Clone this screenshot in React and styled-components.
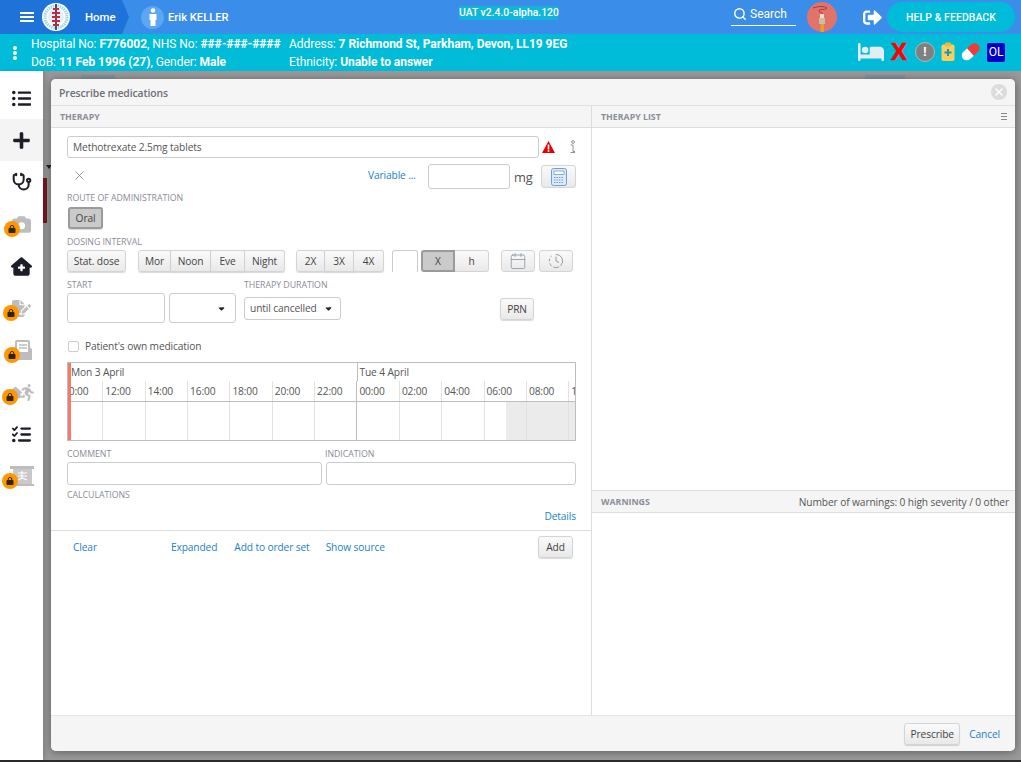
import React from 'react';
import styled, { createGlobalStyle } from 'styled-components';
import { FaBed, FaLock, FaCamera, FaHouseMedical, FaFileSignature, FaPersonRunning, FaListCheck, FaCaretDown, FaHouse } from 'react-icons/fa6';
import { FaSignOutAlt as FaLogout, FaListUl, FaPlus as FaPlusOld } from 'react-icons/fa';
import { Stethoscope, X as CloseX, Calendar, ClockFading, Search } from 'lucide-react';

const Global = createGlobalStyle`
  html, body { margin: 0; padding: 0; background: #fff; }
  * { box-sizing: border-box; }
  body { font-family: "Open Sans", "Liberation Sans", sans-serif; }
`;

const Page = styled.div`
  width: 1021px; height: 762px; overflow: hidden; display: flex; flex-direction: column; background: #999;
`;
const TopBar = styled.header`
  height: 34px; background: #3a8de8; display: grid; grid-template-columns: 459px auto 1fr; color: #fff;
  font-family: Roboto, sans-serif; flex: none;
`;
const Crumbs = styled.div`display: flex; align-items: center;`;
const HomeCrumb = styled.div`
  width: 129px; height: 34px; background: #1f73d8; clip-path: polygon(0 0, 122px 0, 129px 17px, 122px 34px, 0 34px);
  display: flex; align-items: center; padding-left: 20px; flex: none;
`;
const Burger = styled.div`
  width: 14px; height: 10px; border-top: 2px solid #fff; border-bottom: 2px solid #fff; position: relative;
  &::after { content: ''; position: absolute; left: 0; right: 0; top: 2px; height: 2px; background: #fff; }
`;
const LogoWrap = styled.svg`width: 28px; height: 28px; margin-left: 8px; flex: none;`;
const HomeText = styled.span`font-size: 11.4px; font-weight: 500; margin-left: 15px;`;
const PersonBadge = styled.span`
  width: 23px; height: 23px; border-radius: 50%; background: #5ca6f2; margin-left: 12px; display: flex; align-items: center; justify-content: center; flex: none;
`;
const PatientName = styled.span`font-size: 11.2px; font-weight: 500; margin-left: 4px;`;
const Version = styled.div`
  align-self: start; margin-top: 6px; height: 14px; line-height: 14px; background: #0fb6da; font-size: 10.4px; font-weight: 500;
  width: 99px; white-space: nowrap;
`;
const TopRight = styled.div`display: flex; align-items: center; justify-content: flex-end; padding-right: 6px;`;
const SearchBox = styled.div`
  width: 65px; height: 22px; margin-top: -4px; padding: 0 0 2px 2px; border-bottom: 1px solid #fff; display: flex; align-items: center; gap: 3px; font-size: 12px; font-weight: 400;
`;
const Avatar = styled.svg`width: 30px; height: 30px; margin-left: 11px;`;
const Logout = styled.span`margin-left: 26px; display: flex; font-size: 19px;`;
const HelpButton = styled.div`
  width: 128px; height: 30px; margin-left: 5px; border-radius: 15px; background: #00bcd9; display: flex; align-items: center; justify-content: center;
  font-size: 10.4px; font-weight: 500; letter-spacing: .1px;
`;

const PatientBar = styled.div`
  height: 37px; background: #00bcd9; flex: none; display: flex; color: #fff; font-family: Roboto, sans-serif; font-size: 12px; letter-spacing: -.04px; align-items: center;
`;
const Dots = styled.div`
  width: 31px; display: flex; flex-direction: column; align-items: center; gap: 1px;
  span { width: 4px; height: 4px; background: #fff; border-radius: 50%; margin-left: -1px; }
`;
const PatientCol = styled.div`width: ${p => p.$w}px; line-height: 18px; white-space: nowrap; b { font-weight: 700; }`;
const PatientIcons = styled.div`flex: 1; display: flex; justify-content: flex-end; align-items: center; padding-right: 16px; margin-top: -1px;`;
const BedIcon = styled(FaBed)`font-size: 26px; color: #e3edf6; margin-right: 7px;`;
const RedX = styled.span`
  font: 700 24px/1 "Liberation Sans", sans-serif; color: #f00; width: 16px; margin-right: 8px; text-align: center; -webkit-text-stroke: .6px #f00;
`;
const Alert = styled.span`
  width: 20px; height: 20px; border-radius: 50%; background: #808080; border: 1px solid #b4b8bb; color: #fff; font: 700 13px/18px "Liberation Sans", sans-serif; text-align: center; margin-right: 6px;
`;
const SmallSvg = styled.svg`width: ${p => p.$w}px; height: 20px; margin-right: ${p => p.$m}px;`;
const OlBadge = styled.span`
  width: 18px; height: 19px; background: #0000c8; border-radius: 2px; font: 400 12px/19px Roboto, sans-serif; text-align: center; color: #fff;
`;

const Main = styled.div`flex: 1; display: flex; min-height: 0;`;
const Sidebar = styled.nav`
  width: 43px; background: #fff; padding-top: 6px; flex: none; box-shadow: 2px 0 4px rgba(0,0,0,.15); z-index: 1;
`;
const NavItem = styled.div`
  height: 42px; width: 43px; position: relative; display: flex; align-items: center; justify-content: center;
  background: ${p => p.$active ? '#f4f4f4' : 'transparent'}; color: ${p => p.$off ? '#bdbdbd' : '#1c1c2a'}; font-size: ${p => p.$fs || 19}px;
`;
const LockBadge = styled.span`
  position: absolute; left: ${p => p.$l}px; top: 18px; width: 16px; height: 16px; border-radius: 50%; background: #ff9800; color: #33240c; font-size: 8px;
  display: flex; align-items: center; justify-content: center;
`;
const RunnerIcon = styled.span`display: flex; align-items: center; font-size: 13px; margin-left: 2px; svg + svg { font-size: 17px; margin-left: -3px; }`;

const Backdrop = styled.div`flex: 1; position: relative; padding: 8px 6px 9px 8px; display: flex;`;
const GhostRed = styled.div`position: absolute; left: 0; top: 107px; width: 4px; height: 45px; background: #761a20;`;
const GhostArrow = styled.div`position: absolute; left: 3px; top: 94px; border: 3px solid transparent; border-top: 4px solid #222; border-bottom: 0;`;
const GhostTab = styled.div`position: absolute; left: ${p => p.$l}px; top: 4px; width: ${p => p.$w}px; height: 4px; background: #85929f;`;
const Dialog = styled.section`
  flex: 1; background: #fff; border-radius: 5px; box-shadow: 0 1px 8px rgba(0,0,0,.4); display: flex; flex-direction: column; overflow: hidden; position: relative; color: #555;
  font-size: 10.2px; letter-spacing: -.12px;
`;
const DialogHead = styled.div`
  height: 27px; flex: none; background: #f5f5f5; border-bottom: 1px solid #e0e0e0; display: flex; align-items: center; justify-content: space-between; padding: 1px 8px 0;
  font-weight: 600; color: #6c7078; font-size: 10.4px; letter-spacing: -.1px;
`;
const CloseDot = styled.span`
  width: 16px; height: 16px; border-radius: 50%; background: #dcdcdc; color: #fff; display: flex; align-items: center; justify-content: center; margin-top: -2px;
`;
const Columns = styled.div`flex: 1; display: flex; min-height: 0;`;
const LeftCol = styled.div`width: 541px; flex: none; border-right: 1px solid #ddd; display: flex; flex-direction: column;`;
const RightCol = styled.div`flex: 1; display: flex; flex-direction: column;`;
const SectionHead = styled.div`
  height: ${p => p.$h || 22}px; flex: none; background: #f5f5f5; border-bottom: 1px solid #ddd; ${p => p.$top && 'border-top: 1px solid #ddd;'} display: flex; align-items: center; justify-content: space-between; padding: 0 8px 0 9px;
  font-size: 8.8px; font-weight: 700; color: #8b8e98; letter-spacing: 0;
`;
const WarnCount = styled.span`font-size: 10.2px; font-weight: 400; color: #555; letter-spacing: -.1px; margin-right: -2px;`;
const MenuLines = styled.span`width: 6px; height: 7px; border-top: 1px solid #888; border-bottom: 1px solid #888; position: relative;
  &::after { content: ''; position: absolute; left: 0; right: 0; top: 2px; height: 1px; background: #888; }
`;
const Form = styled.div`padding: 8px 15px 0 16px; flex: none;`;
const Row = styled.div`display: flex; align-items: center; margin-top: ${p => p.$mt || 0}px; height: ${p => p.$h ? p.$h + 'px' : 'auto'};`;
const Field = styled.div`
  height: ${p => p.$h}px; width: ${p => p.$w ? p.$w + 'px' : 'auto'}; ${p => p.$grow && 'flex: 1;'}
  border: 1px solid #ccc; border-radius: 3px; background: #fff; display: flex; align-items: center; padding: 0 ${p => p.$pr || 5}px 0 5px; margin-left: ${p => p.$ml || 0}px; color: #555; flex-shrink: 0;
  justify-content: ${p => p.$justify || 'flex-start'};
  white-space: nowrap;
`;
const Label = styled.div`
  font-size: 8.8px; color: #8a8c97; text-transform: uppercase; letter-spacing: -.05px; line-height: 11px; margin-top: ${p => p.$mt || 0}px; width: ${p => p.$w ? p.$w + 'px' : 'auto'}; flex: none;
`;
const Link = styled.a`
  color: #1a7fca; margin-left: ${p => p.$ml || 0}px; margin-top: ${p => p.$mt || 0}px; white-space: nowrap;
`;
const Btn = styled.div`
  height: ${p => p.$h || 22}px; width: ${p => p.$w}px; margin-left: ${p => p.$ml || 0}px; margin-top: ${p => p.$mt || 0}px; flex: none;
  display: flex; align-items: center; justify-content: center; color: #444; white-space: nowrap;
  border: 1px solid ${p => p.$on ? '#9a9a9a' : '#d4d4d4'};
  ${p => p.$on ? 'border-width: 2px;' : ''}
  background: ${p => p.$on ? '#cacaca' : 'linear-gradient(#fafafa, #e9e9e9)'};
  border-radius: ${p => p.$joined === 'left' ? '3px 0 0 3px' : p.$joined === 'right' ? '0 3px 3px 0' : p.$joined === 'mid' ? '0' : '3px'};
  ${p => p.$joined && p.$joined !== 'left' && 'border-left-width: 0;'}
  ${p => p.$lift && 'box-shadow: 0 1px 1px rgba(0,0,0,.15);'}
`;
const ShortInput = styled.div`
  width: 26px; height: 22px; margin-left: 8px; border: 1px solid #ccc; border-bottom: none; border-radius: 3px 3px 0 0; background: #fff; flex: none;
`;
const ClearCell = styled.span`display: flex; color: #888; margin: -3px 0 0 5px; width: 296px; flex: none;`;
const Unit = styled.span`margin-left: 4px; width: 27px; font-size: 12.8px; flex: none;`;
const Check = styled.span`width: 11px; height: 11px; border: 1px solid #ccc; border-radius: 2px; margin-left: 1px; flex: none;`;
const CheckText = styled.span`margin-left: 6px; line-height: 14px;`;
const Warn = styled.svg`width: 13px; height: 12px; margin-left: 3px; flex: none;`;
const InfoMark = styled.svg`margin-left: 13px; width: 8px; height: 14px; flex: none;`;

const Timeline = styled.div`
  margin-top: 9px; height: 79px; border: 1px solid #bdbdbd; position: relative; overflow: hidden; background: #fff;
`;
const RedBar = styled.div`position: absolute; left: 0; top: 0; bottom: 0; width: 3px; background: #f47a6b; z-index: 1;`;
const Track = styled.div`margin-left: -8px; width: 640px; display: flex; flex-direction: column; height: 100%;`;
const DayRow = styled.div`display: flex; height: 18px;`;
const Day = styled.div`
  width: ${p => p.$w}px; padding-left: ${p => p.$pad}px; line-height: 18px; color: #555; ${p => p.$line && 'border-left: 1px solid #bdbdbd;'} flex: none;
`;
const HourRow = styled.div`display: flex; height: 21px; border-bottom: 1px solid #bdbdbd;`;
const Hour = styled.div`
  width: ${p => p.$day ? 42.5 : 42.35}px; flex: none; padding-left: 2px; line-height: 20px; border-left: 1px solid ${p => p.$day ? '#bdbdbd' : '#e2e2e2'}; overflow: hidden; white-space: nowrap;
`;
const SlotRow = styled.div`display: flex; flex: 1;`;
const Slot = styled.div`
  width: ${p => p.$day ? 42.5 : 42.35}px; flex: none; border-left: 1px solid ${p => p.$day ? '#bdbdbd' : '#e2e2e2'};
  background: ${p => p.$shade === 'half' ? 'linear-gradient(90deg, #fff 50%, #ebebeb 50%)' : p.$shade === 'full' ? '#ebebeb' : '#fff'};
`;
const DetailsRow = styled.div`display: flex; justify-content: flex-end; margin-top: 8px; line-height: 14px;`;
const Actions = styled.div`
  border-top: 1px solid #ddd; margin-top: 7px; height: 33px; display: flex; align-items: center; padding: 0 18px 0 22px; flex: none;
`;
const Spacer = styled.div`flex: 1;`;
const DialogFoot = styled.div`
  height: 36px; flex: none; background: #f5f5f5; border-top: 1px solid #e5e5e5; display: flex; align-items: center; justify-content: flex-end; padding-right: 15px;
`;
const WarningsBody = styled.div`height: 202px; flex: none;`;
const BottomEdge = styled.div`height: 2px; background: #2c2c2c; flex: none;`;

const hours = ['10:00','12:00','14:00','16:00','18:00','20:00','22:00','00:00','02:00','04:00','06:00','08:00','10:00','12:00','14:00'];

const Logo = () => (
  <LogoWrap viewBox="0 0 28 28">
    <circle cx="14" cy="14" r="14" fill="#fff" />
    <circle cx="14" cy="14" r="11" fill="none" stroke="#9fd6ea" strokeWidth="3" strokeDasharray="1.5 .8" />
    <circle cx="14" cy="14" r="8" fill="#dff1f8" />
    <rect x="13" y="1" width="2" height="26" fill="#2a5c8a" />
    <path d="M11 6h6M10 10h8M10 14h8M10 18h8M11 22h6" stroke="#d8232a" strokeWidth="2" />
  </LogoWrap>
);

const Person = () => (
  <svg width="10" height="18" viewBox="0 0 10 18">
    <circle cx="5" cy="2.5" r="2.3" fill="#fff" />
    <path d="M1.5 6h7v6H7.5v6h-5v-6h-1z" fill="#fff" />
  </svg>
);

const Torch = () => (
  <Avatar viewBox="0 0 30 30">
    <circle cx="15" cy="15" r="15" fill="#e2736b" />
    <path d="M6 6c6-2 11-2 14 0-3 3-8 0-8 3 0 2 4 1 4 4" fill="none" stroke="#a33b3b" strokeWidth="1" />
    <rect x="13" y="12" width="4" height="8" fill="#e7dcc6" />
    <rect x="12" y="16" width="6" height="6" fill="#c9bfa8" />
    <rect x="13.5" y="22" width="3.5" height="8" fill="#e8a02c" />
  </Avatar>
);

const Clip = () => (
  <SmallSvg $w={14} $m={6} viewBox="0 0 14 20">
    <rect x="0.5" y="2.5" width="13" height="16.5" rx="2" fill="#f9cf5b" />
    <rect x="4" y="0.5" width="6" height="4" rx="1" fill="#f0b73c" />
    <path d="M7 7v7M3.5 10.5h7" stroke="#1597c4" strokeWidth="2" />
  </SmallSvg>
);

const Pill = () => (
  <SmallSvg $w={19} $m={7} viewBox="0 0 19 20">
    <g transform="rotate(-42 9.5 10)">
      <path d="M9.5 5H4.5a5 5 0 0 0 0 10h5z" fill="#fff" />
      <path d="M9.5 5h5.5a5 5 0 0 1 0 10H9.5z" fill="#ee3b3b" />
    </g>
  </SmallSvg>
);

const Calculator = () => (
  <svg width="16" height="18" viewBox="0 0 16 18" fill="none">
    <rect x=".5" y=".5" width="15" height="17" rx="2" fill="#dce9f7" stroke="#6f9fd0" />
    <rect x="3" y="3" width="10" height="3.5" fill="#fff" stroke="#6f9fd0" strokeWidth=".8" />
    <path d="M3 9.5h10M3 12h10M3 14.5h10" stroke="#6f9fd0" strokeWidth="1.2" strokeDasharray="1.4 1.1" />
  </svg>
);

const MailClipboard = () => (
  <svg width="22" height="20" viewBox="0 0 22 20">
    <path d="M1 9l4-3v3h12V6l4 3v11H1z" fill="#bdbdbd" />
    <rect x="5" y="1" width="13" height="12" rx="1" fill="#fff" stroke="#bdbdbd" strokeWidth="2" />
    <path d="M8 5h8M8 8h8" stroke="#bdbdbd" strokeWidth="1.5" />
  </svg>
);

const Counter = () => (
  <svg width="24" height="20" viewBox="0 0 24 20">
    <rect x="0" y="0" width="24" height="3" fill="#bdbdbd" />
    <rect x="3" y="3" width="19" height="15" fill="#c9c9c9" />
    <rect x="0" y="18" width="24" height="2" fill="#bdbdbd" />
    <path d="M8 7h9M8 10h9M12 5v8M8 14l4-2 5 2" stroke="#fff" strokeWidth="1.2" fill="none" />
  </svg>
);

const LockedItem = ({ left, children }) => (
  <NavItem $off>
    {children}
    <LockBadge $l={left}><FaLock /></LockBadge>
  </NavItem>
);

export default function App() {
  return (
    <Page>
      <Global />
      <TopBar>
        <Crumbs>
          <HomeCrumb>
            <Burger />
            <Logo />
            <HomeText>Home</HomeText>
          </HomeCrumb>
          <PersonBadge><Person /></PersonBadge>
          <PatientName>Erik KELLER</PatientName>
        </Crumbs>
        <Version>UAT v2.4.0-alpha.120</Version>
        <TopRight>
          <SearchBox><Search size={14} strokeWidth={2.4} />Search</SearchBox>
          <Torch />
          <Logout><FaLogout /></Logout>
          <HelpButton>HELP &amp; FEEDBACK</HelpButton>
        </TopRight>
      </TopBar>

      <PatientBar>
        <Dots><span /><span /><span /></Dots>
        <PatientCol $w={258}>
          <div>Hospital No: <b>F776002</b>, NHS No: <b>###-###-####</b></div>
          <div>DoB: <b>11 Feb 1996 (27)</b>, Gender: <b>Male</b></div>
        </PatientCol>
        <PatientCol $w={300}>
          <div>Address: <b>7 Richmond St, Parkham, Devon, LL19 9EG</b></div>
          <div>Ethnicity: <b>Unable to answer</b></div>
        </PatientCol>
        <PatientIcons>
          <BedIcon />
          <RedX>X</RedX>
          <Alert>!</Alert>
          <Clip />
          <Pill />
          <OlBadge>OL</OlBadge>
        </PatientIcons>
      </PatientBar>

      <Main>
        <Sidebar>
          <NavItem><FaListUl /></NavItem>
          <NavItem $active><FaPlusOld /></NavItem>
          <NavItem><Stethoscope size={20} strokeWidth={2.4} /></NavItem>
          <LockedItem left={4}><FaCamera /></LockedItem>
          <NavItem $fs={21}><FaHouseMedical /></NavItem>
          <LockedItem left={3}><FaFileSignature /></LockedItem>
          <LockedItem left={4}><MailClipboard /></LockedItem>
          <LockedItem left={2}><RunnerIcon><FaHouse /><FaPersonRunning /></RunnerIcon></LockedItem>
          <NavItem><FaListCheck /></NavItem>
          <LockedItem left={2}><Counter /></LockedItem>
        </Sidebar>

        <Backdrop>
          <GhostRed />
          <GhostArrow />
          <GhostTab $l={38} $w={34} />
          <GhostTab $l={822} $w={40} />
          <Dialog>
            <DialogHead>
              Prescribe medications
              <CloseDot><CloseX size={12} strokeWidth={3} /></CloseDot>
            </DialogHead>
            <Columns>
              <LeftCol>
                <SectionHead>THERAPY</SectionHead>
                <Form>
                  <Row>
                    <Field $grow $h={22}>Methotrexate 2.5mg tablets</Field>
                    <Warn viewBox="0 0 13 12">
                      <path d="M6.5 0L13 12H0z" fill="#e60000" />
                      <rect x="5.7" y="3.5" width="1.6" height="5" fill="#fff" />
                      <rect x="5.7" y="9.2" width="1.6" height="1.6" fill="#fff" />
                    </Warn>
                    <InfoMark viewBox="0 0 8 14" fill="none" stroke="#8b949c"><circle cx="5" cy="2" r="1.4" /><path d="M5 5v6.5H7M5 5H2.5M2.5 12.5H7" /></InfoMark>
                  </Row>
                  <Row $mt={6} $h={25}>
                    <ClearCell><CloseX size={15} strokeWidth={1.4} /></ClearCell>
                    <Link $mt={-3}>Variable ...</Link>
                    <Spacer />
                    <Field $w={82} $h={25} />
                    <Unit>mg</Unit>
                    <Btn $w={35} $h={23}><Calculator /></Btn>
                  </Row>
                  <Label $mt={4}>Route of administration</Label>
                  <Row $mt={3}>
                    <Btn $on $w={35} $ml={1} $lift>Oral</Btn>
                  </Row>
                  <Label $mt={8}>Dosing interval</Label>
                  <Row $mt={2}>
                    <Btn $w={59} $lift>Stat. dose</Btn>
                    <Btn $w={33} $ml={12} $joined="left" $lift>Mor</Btn>
                    <Btn $w={40} $joined="mid" $lift>Noon</Btn>
                    <Btn $w={34} $joined="mid" $lift>Eve</Btn>
                    <Btn $w={40} $joined="right" $lift>Night</Btn>
                    <Btn $w={29} $ml={11} $joined="left" $lift>2X</Btn>
                    <Btn $w={29} $joined="mid" $lift>3X</Btn>
                    <Btn $w={30} $joined="right" $lift>4X</Btn>
                    <ShortInput />
                    <Btn $on $w={34} $ml={3} $joined="left">X</Btn>
                    <Btn $w={34} $joined="right">h</Btn>
                    <Btn $w={34} $ml={12}><Calendar size={18} strokeWidth={1} color="#7f929f" /></Btn>
                    <Btn $w={34} $ml={4}><ClockFading size={16} strokeWidth={1.3} color="#8a8f94" /></Btn>
                  </Row>
                  <Row $mt={8}>
                    <Label $w={177}>Start</Label>
                    <Label>Therapy duration</Label>
                  </Row>
                  <Row $h={30} $mt={2}>
                    <Field $w={98} $h={30} />
                    <Field $w={67} $h={30} $ml={4} $pr={9} $justify="flex-end"><FaCaretDown size={9} color="#222" /></Field>
                    <Field $w={97} $h={23} $ml={8} $pr={7} $justify="space-between">until cancelled <FaCaretDown size={9} color="#222" /></Field>
                    <Btn $w={34} $ml={159} $mt={2} $lift>PRN</Btn>
                  </Row>
                  <Row $mt={16}>
                    <Check />
                    <CheckText>Patient's own medication</CheckText>
                  </Row>
                  <Timeline>
                    <RedBar />
                    <Track>
                      <DayRow>
                        <Day $w={296.5} $pad={11}>Mon 3 April</Day>
                        <Day $w={300} $pad={2} $line>Tue 4 April</Day>
                      </DayRow>
                      <HourRow>
                        {hours.map((h, i) => <Hour key={i} $day={i === 7}>{h}</Hour>)}
                      </HourRow>
                      <SlotRow>
                        {hours.map((h, i) => <Slot key={i} $day={i === 7} $shade={i === 10 ? 'half' : i > 10 ? 'full' : undefined} />)}
                      </SlotRow>
                    </Track>
                  </Timeline>
                  <Row $mt={8}>
                    <Label $w={258}>Comment</Label>
                    <Label>Indication</Label>
                  </Row>
                  <Row $mt={2}>
                    <Field $w={255} $h={23} />
                    <Field $grow $h={23} $ml={4} />
                  </Row>
                  <Label $mt={5}>Calculations</Label>
                  <DetailsRow><Link>Details</Link></DetailsRow>
                </Form>
                <Actions>
                  <Link>Clear</Link>
                  <Link $ml={74}>Expanded</Link>
                  <Link $ml={17}>Add to order set</Link>
                  <Link $ml={16}>Show source</Link>
                  <Spacer />
                  <Btn $w={35} $lift>Add</Btn>
                </Actions>
                <Spacer />
              </LeftCol>
              <RightCol>
                <SectionHead>THERAPY LIST <MenuLines /></SectionHead>
                <Spacer />
                <SectionHead $h={23} $top>WARNINGS <WarnCount>Number of warnings: 0 high severity / 0 other</WarnCount></SectionHead>
                <WarningsBody />
              </RightCol>
            </Columns>
            <DialogFoot>
              <Btn $w={56} $lift>Prescribe</Btn>
              <Link $ml={9}>Cancel</Link>
            </DialogFoot>
          </Dialog>
        </Backdrop>
      </Main>
      <BottomEdge />
    </Page>
  );
}
